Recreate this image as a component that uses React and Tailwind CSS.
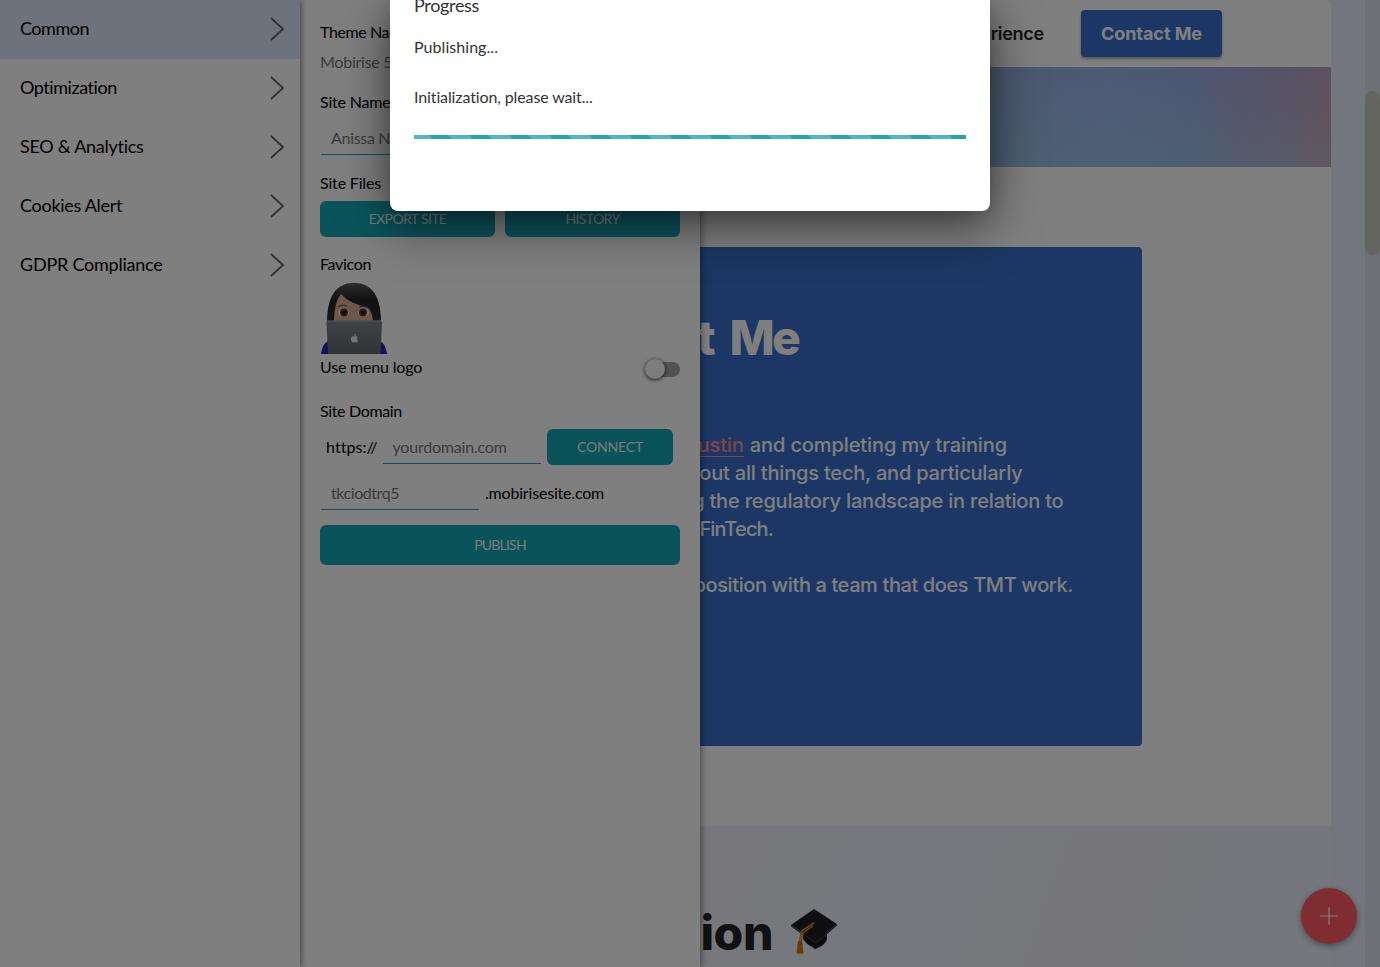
const MENU = [
  { label: 'Common', tracking: 'tracking-[-0.48px]', active: true },
  { label: 'Optimization', tracking: 'tracking-[-0.44px]' },
  { label: 'SEO & Analytics', tracking: 'tracking-[-0.26px]' },
  { label: 'Cookies Alert', tracking: 'tracking-[-0.29px]' },
  { label: 'GDPR Compliance', tracking: 'tracking-[-0.23px]' },
];

function Chevron() {
  return (
    <svg width="16" height="26" viewBox="0 0 16 26" fill="none" stroke="#666" strokeWidth="1.9">
      <path d="M2 2 14 13 2 24" />
    </svg>
  );
}

function Sidebar() {
  return (
    <nav className="relative z-20 h-full w-[300px] shrink-0 bg-white shadow-[0_0_7px_rgba(0,0,0,0.65)]">
      {MENU.map((m) => (
        <div
          key={m.label}
          className={`flex h-[59px] items-center justify-between pb-0.5 pl-5 pr-[15px] text-[18px] leading-none text-black ${m.tracking} ${m.active ? 'bg-[#dde4fb]' : ''}`}
        >
          <span className="pb-px">{m.label}</span>
          <Chevron />
        </div>
      ))}
    </nav>
  );
}

function Button({ className, children }) {
  return (
    <button className={`flex items-center justify-center rounded-[6px] bg-[#16a7b7] text-[14px] leading-none text-white/95 ${className}`}>
      {children}
    </button>
  );
}

function Technologist() {
  return (
    <svg width="70" height="72" viewBox="0 0 70 72" className="block">
      <defs>
        <linearGradient id="hair" x1="0" y1="0" x2="0" y2="1">
          <stop offset="0" stopColor="#5a5a5a" />
          <stop offset="0.35" stopColor="#242424" />
          <stop offset="1" stopColor="#303030" />
        </linearGradient>
        <linearGradient id="lid" x1="0" y1="0" x2="0" y2="1">
          <stop offset="0" stopColor="#7e868a" />
          <stop offset="1" stopColor="#62696e" />
        </linearGradient>
      </defs>
      <path d="M1 72C2 64 5 60 10 58H58C63 60 66 64 67 72Z" fill="#2424b4" />
      <path d="M7 48C6 20 12 1 34 1S62 20 61 48Z" fill="url(#hair)" />
      <path d="M14 40C14 26 17 17 21 12C28 20 39 23 48 26C52 30 53 35 53 42H14Z" fill="#dcae92" />
      <path d="M18 25Q22 22 27 24M39 25Q45 23 50 27" fill="none" stroke="#7a5440" strokeWidth="1.2" />
      <ellipse cx="23.5" cy="30.5" rx="5.500" ry="4.200" fill="#e9e3df" />
      <ellipse cx="43.5" cy="30.5" rx="5.500" ry="4.200" fill="#e9e3df" />
      <circle cx="24" cy="30.5" r="4" fill="#5a3a28" />
      <circle cx="43" cy="30.5" r="4" fill="#5a3a28" />
      <circle cx="24" cy="30.5" r="2" fill="#0c0808" />
      <circle cx="43" cy="30.5" r="2" fill="#0c0808" />
      <path d="M6.500 40.500Q6.500 38.500 8.500 38.500H60Q62 38.500 62 40.500L60.500 72H8Z" fill="url(#lid)" />
      <path d="M7.500 39H61" stroke="#a5adb1" strokeWidth="1" />
      <path
        d="M34.300 54.600C32.800 53.700 31 54.600 30.900 56.700C30.800 58.600 32 60.400 33 60.400C33.700 60.400 34 60 34.600 60S35.500 60.400 36.200 60.400C37 60.400 37.700 59.300 38 58.400C36.600 57.700 36.700 55.900 37.800 55.200C37 54.200 35.500 54.200 34.300 54.600ZM34.300 54C34.200 52.900 35.100 51.900 36.100 51.800C36.300 52.900 35.300 54 34.300 54Z"
        fill="#eee"
      />
    </svg>
  );
}

function SettingsPanel() {
  return (
    <section className="relative z-10 h-full w-[400px] shrink-0 bg-white px-5 pt-5 text-[16px] text-black shadow-[0_0_8px_rgba(0,0,0,0.6)]">
      <div className="h-6 leading-6 tracking-[-0.4px]">Theme Name</div>
      <div className="mt-1.5 h-6 leading-6 tracking-[-0.25px] text-[#777]">Mobirise 5</div>
      <div className="mt-4 h-6 leading-6 tracking-[-0.19px]">Site Name</div>
      <div className="ml-px mt-[9px] h-[32px] border-b border-[#16a7b7] pl-2.5 leading-[29px] tracking-[-0.3px] text-[#777]">Anissa N</div>
      <div className="mt-4 h-6 leading-6 tracking-[-0.17px]">Site Files</div>
      <div className="mt-1.5 flex gap-2.5">
        <Button className="h-9 flex-1 tracking-[-0.63px]">EXPORT SITE</Button>
        <Button className="h-9 flex-1 tracking-[-0.62px]">HISTORY</Button>
      </div>
      <div className="mt-[15px] h-6 leading-6 tracking-[-0.33px]">Favicon</div>
      <div className="mt-1.5">
        <Technologist />
      </div>
      <div className="mt-px flex h-7 items-center justify-between">
        <span className="pb-[5px] leading-6 tracking-[-0.19px]">Use menu logo</span>
        <span className="flex h-[15px] w-[34px] items-center rounded-full bg-[#a5a5a5]">
          <span className="-ml-px size-5 shrink-0 rounded-full bg-[#fafafa] shadow-[0_1px_4px_rgba(0,0,0,0.8)]" />
        </span>
      </div>
      <div className="mt-4 h-6 leading-6 tracking-[-0.34px]">Site Domain</div>
      <div className="mt-1.5 flex h-9">
        <span className="ml-1.5 w-[57px] leading-9 tracking-[0.06px]">https://</span>
        <span className="h-[35px] w-[158px] border-b border-[#16a7b7] pl-[9.5px] leading-9 tracking-[-0.2px] text-[#777]">yourdomain.com</span>
        <Button className="ml-1.5 h-9 w-[126px] tracking-[-0.17px]">CONNECT</Button>
      </div>
      <div className="mt-3 flex h-[33px]">
        <span className="ml-px w-[158px] border-b border-[#16a7b7] pl-2.5 leading-[31px] tracking-[-0.44px] text-[#777]">tkciodtrq5</span>
        <span className="ml-1.5 leading-[31px] tracking-[-0.19px]">.mobirisesite.com</span>
      </div>
      <Button className="mt-[15px] h-10 w-full tracking-[-0.8px]">PUBLISH</Button>
    </section>
  );
}

function Line({ className, children }) {
  return <div className={`flex h-7 justify-end whitespace-pre leading-7 ${className}`}>{children}</div>;
}

function GraduationCap() {
  return (
    <svg width="48" height="48" viewBox="0 0 48 48" className="block">
      <path d="M13 22V31C17 37 21 38 25 41C32 39 37 34 37 30V16Z" fill="#17171a" />
      <path d="M1 17 24 1 47 16 26 34Z" fill="#1f1f22" />
      <path d="M1 17 26 34 47 16V17.5L26 36 1 18.5Z" fill="#38383b" />
      <path d="M24 15 13 22Q10 24 9.500 37M23 18 14 24Q12 26 11 37" fill="none" stroke="#d78b20" strokeWidth="1.5" />
      <path d="M8 33H12L13.500 45Q10 47 6.500 45Z" fill="#c57a1c" />
      <path d="M8 36H12.500" stroke="#8a5010" strokeWidth="1" />
    </svg>
  );
}

function Preview() {
  return (
    <main className="flex h-full min-w-0 flex-1 bg-[#e8eefb] font-['Inter',sans-serif]">
      <div className="flex w-[631px] shrink-0 flex-col rounded-tr-[6px] bg-white">
        <header className="flex h-[67px] shrink-0 items-center justify-end pr-[109px]">
          <span className="text-[18px] font-semibold tracking-[-0.25px] text-[#232323]">rience</span>
          <span className="ml-[37px] flex h-[47px] w-[141px] items-center justify-center rounded-[4px] bg-[#386eca] text-[18px] font-bold tracking-[-0.06px] text-white shadow-[0_2px_3px_rgba(0,0,0,0.35)]">
            Contact Me
          </span>
        </header>
        <div className="h-[100px] shrink-0 bg-[linear-gradient(0deg,rgba(150,215,225,0.2),rgba(150,170,235,0.12)_60%,rgba(150,150,220,0.25)),linear-gradient(90deg,#98b8e0_0%,#98b8e0_48%,#9ebcec_65%,#9cb6e4_78%,#b0acd2_88%,#b8aac6_94%,#c8a6b4_100%)]" />
        <div className="h-[659px] shrink-0 pt-20">
          <div className="h-[499px] w-[442px] rounded-r-[4px] bg-[#386eca] pt-[62px] text-[20px] font-medium text-white">
            <Line className="h-[58px] w-[98px] text-[48px] font-extrabold leading-[58px] tracking-[-2.8px] [word-spacing:9px]">t Me</Line>
            <div className="mt-[64px]">
              <Line className="w-[307px] tracking-[-0.1px]">
                <span className="mr-1.5 h-[26px] border-b border-[#ff8d85] text-[#ff8d85]">ustin</span>and completing my training
              </Line>
              <Line className="w-[322.5px] tracking-[-0.19px]">out all things tech, and particularly</Line>
              <Line className="w-[363.5px] tracking-[-0.19px]">g the regulatory landscape in relation to</Line>
              <Line className="w-[73px] tracking-[-0.85px]">FinTech.</Line>
              <Line className="mt-7 w-[373px] tracking-[-0.39px]">position with a team that does TMT work.</Line>
            </div>
          </div>
        </div>
        <div className="flex flex-1 bg-[linear-gradient(110deg,#efeff8,#ecf1fb_40%,#efeff6_60%,#e9effa)] pt-[78px]">
          <Line className="h-[58px] w-[73px] text-[48px] font-extrabold leading-[58px] tracking-[-0.4px] text-[#232323]">ion</Line>
          <div className="ml-[17px] mt-[4px]">
            <GraduationCap />
          </div>
        </div>
      </div>
      <div className="flex-1 bg-[#e6ecfa]" />
      <div className="w-[15px] bg-[#dce1ec] pt-[91px]">
        <div className="h-[164px] rounded-full bg-[#c8cabf]" />
      </div>
    </main>
  );
}

function ProgressModal() {
  return (
    <div className="absolute left-[390px] top-0 z-40 h-[211px] w-[600px] rounded-b-[8px] bg-white px-6 text-[16px] text-[#333] shadow-[0_14px_50px_rgba(0,0,0,0.55),0_4px_18px_rgba(0,0,0,0.15)]">
      <div className="-mt-[7px] h-6 text-[18px] leading-6 tracking-[-0.33px]">Progress</div>
      <div className="mt-[18px] h-6 leading-6 tracking-[0.05px]">Publishing...</div>
      <div className="mt-[26px] h-6 leading-6 tracking-[-0.12px]">Initialization, please wait...</div>
      <svg width="552" height="4" viewBox="0 0 552 4" className="mt-[26px] block">
        <defs>
          <pattern id="stripes" width="40" height="4" patternUnits="userSpaceOnUse">
            <rect width="40" height="4" fill="#4cb8c6" />
            <path d="M15 0H34L38 4H19Z" fill="#25a2b4" />
          </pattern>
        </defs>
        <rect width="552" height="4" fill="url(#stripes)" />
      </svg>
    </div>
  );
}

export default function App() {
  return (
    <div className="relative flex h-[967px] w-[1380px] overflow-hidden bg-white font-['Lato',sans-serif]">
      <Sidebar />
      <SettingsPanel />
      <Preview />
      <button aria-label="Add block" className="absolute left-[1301px] top-[888px] z-20 flex size-14 items-center justify-center rounded-full bg-[#ff5a60] shadow-[0_2px_6px_rgba(0,0,0,0.4)]">
        <svg width="18" height="18" viewBox="0 0 18 18" stroke="#fff" strokeWidth="1.200">
          <path d="M9 0V18M0 9H18" />
        </svg>
      </button>
      <div className="absolute inset-0 z-30 bg-black/50" />
      <ProgressModal />
    </div>
  );
}
